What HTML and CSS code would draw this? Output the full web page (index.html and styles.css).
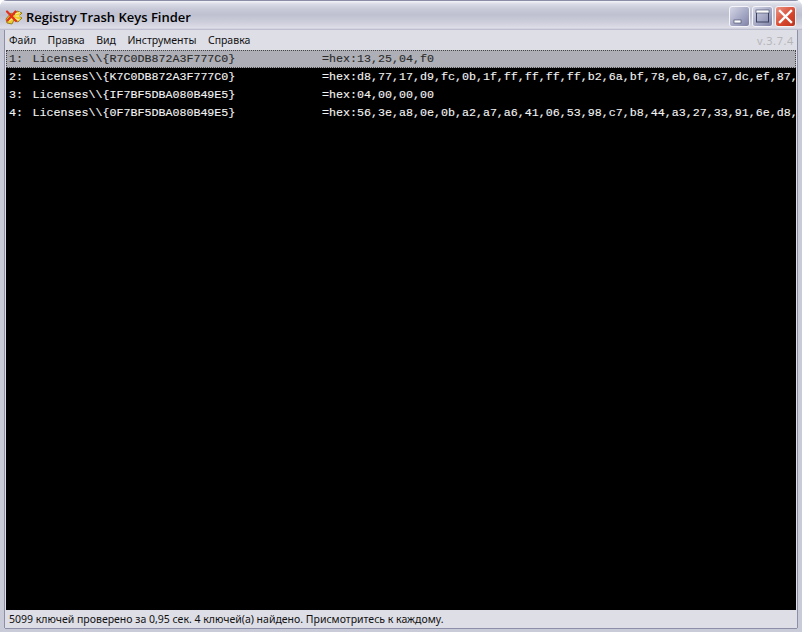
FILE: index.html
```html
<!DOCTYPE html>
<html lang="ru">
<head>
<meta charset="utf-8">
<title>Registry Trash Keys Finder</title>
<link rel="stylesheet" href="styles.css">
</head>
<body>
<div class="window">
  <header class="titlebar">
    <svg class="app-icon" width="18" height="18" viewBox="0 0 18 18">
      <path d="M1 11 L6 5 L9 7 L12 3 L17 5 L14 8 L17 10 L13 14 L9 12 L7 16 L2 15 Z" fill="#eecb2a" stroke="#86680e" stroke-width="0.8"/>
      <path d="M10 6 L15 4.5 M10.5 8 L15.5 8 M10 10.5 L14.5 12 M4 13 L7 11" stroke="#fff3a4" stroke-width="1"/>
      <path d="M2 3.5 L11 13 M10.5 3.5 L2.5 12.5" stroke="#e2301a" stroke-width="2.2" stroke-linecap="round"/>
    </svg>
    <h1 class="title">Registry Trash Keys Finder</h1>
    <div class="controls">
      <div class="btn btn-blue">
        <svg width="21" height="21" viewBox="0 0 21 21"><rect x="5" y="14" width="7" height="3" fill="#fff" stroke="#39405f" stroke-width="0.6"/></svg>
      </div>
      <div class="btn btn-blue">
        <svg width="21" height="21" viewBox="0 0 21 21"><rect x="4.5" y="5" width="12" height="11" fill="none" stroke="#39405f" stroke-width="1"/><rect x="4" y="4" width="13" height="3" fill="#fff" stroke="#39405f" stroke-width="0.6"/></svg>
      </div>
      <div class="btn btn-red">
        <svg width="21" height="21" viewBox="0 0 21 21"><path d="M5 5 L16 16 M16 5 L5 16" stroke="#fff" stroke-width="2.4" stroke-linecap="square"/></svg>
      </div>
    </div>
  </header>
  <div class="body">
    <nav class="menubar">
      <span class="menu-item">Файл</span>
      <span class="menu-item">Правка</span>
      <span class="menu-item">Вид</span>
      <span class="menu-item">Инструменты</span>
      <span class="menu-item">Справка</span>
      <span class="version">v.3.7.4</span>
    </nav>
    <main class="list">
      <div class="row selected"><span class="num">1:</span><span class="key">Licenses\\{R7C0DB872A3F777C0}</span><span class="val">=hex:13,25,04,f0</span></div>
      <div class="row"><span class="num">2:</span><span class="key">Licenses\\{K7C0DB872A3F777C0}</span><span class="val">=hex:d8,77,17,d9,fc,0b,1f,ff,ff,ff,ff,b2,6a,bf,78,eb,6a,c7,dc,ef,87,</span></div>
      <div class="row"><span class="num">3:</span><span class="key">Licenses\\{IF7BF5DBA080B49E5}</span><span class="val">=hex:04,00,00,00</span></div>
      <div class="row"><span class="num">4:</span><span class="key">Licenses\\{0F7BF5DBA080B49E5}</span><span class="val">=hex:56,3e,a8,0e,0b,a2,a7,a6,41,06,53,98,c7,b8,44,a3,27,33,91,6e,d8,</span></div>
    </main>
    <footer class="status">5099 ключей проверено за 0,95 сек. 4 ключей(а) найдено. Присмотритесь к каждому.</footer>
  </div>
</div>
</body>
</html>
```
FILE: styles.css
```css
* { box-sizing: border-box; }
html, body { margin: 0; padding: 0; background: #fff; }
body { width: 802px; height: 632px; overflow: hidden; }

.window {
  width: 802px;
  height: 632px;
  display: flex;
  flex-direction: column;
  border-radius: 7px 7px 0 0;
  background: #c9cbd9;
  overflow: hidden;
}

.titlebar {
  height: 30px;
  flex: none;
  display: flex;
  align-items: center;
  padding: 2px 6px 0 5px;
  background: linear-gradient(#f4f5f9 0, #d9dbe6 3px, #c8cad8 8px, #bfc1d1 14px, #cfd0dc 22px, #dddee7 27px, #9c9db5 30px);
  border-top: 1px solid #8c8ea8;
}
.app-icon { flex: none; margin-right: 3px; }
.title {
  margin: 0;
  flex: 1;
  font: 600 13px "Open Sans", sans-serif;
  color: #000;
  white-space: nowrap;
}
.controls { display: flex; gap: 2px; }
.btn {
  width: 21px;
  height: 21px;
  border: 1px solid #f4f4f8;
  border-radius: 3px;
  overflow: hidden;
}
.btn svg { display: block; margin: -1px; }
.btn-blue { background: linear-gradient(135deg, #d4d6e6, #9da0be 65%, #7f82a6); }
.btn-red { background: linear-gradient(135deg, #eb9484, #d6452c 60%, #bb3520); }

.body {
  flex: 1;
  min-height: 0;
  display: flex;
  flex-direction: column;
  margin: 0 5px 4px 5px;
  padding: 0 1px;
  background: #dedee6;
  box-shadow: -1px 0 0 #8d8fa8, 1px 0 0 #8d8fa8, 0 1px 0 #8d8fa8;
}

.menubar {
  height: 20px;
  flex: none;
  display: flex;
  align-items: center;
  padding: 0 0 0 3px;
  gap: 11.5px;
  font: 10.5px "Noto Sans", sans-serif;
  color: #111;
}
.version {
  margin-left: auto;
  margin-right: 2px;
  color: #b6b6b8;
  font: 11px "Noto Sans", sans-serif;
  letter-spacing: 0.6px;
}

.list {
  flex: 1;
  min-height: 0;
  background: #000;
  overflow: hidden;
  font: 11.67px/18px "Liberation Mono", monospace;
  color: #f4f4f4;
  -webkit-text-stroke: 0.12px currentColor;
}
.row {
  height: 18px;
  display: flex;
  white-space: nowrap;
  padding-left: 3px;
}
.row.selected {
  background: #aeafb6;
  color: #2a2a2a;
  outline: 1px dotted #444;
  outline-offset: -1px;
}
.num { width: 23.5px; flex: none; }
.key { width: 289.5px; flex: none; }
.val { flex: none; }

.status {
  height: 18px;
  flex: none;
  font: 10.5px/18px "Noto Sans", sans-serif;
  color: #111;
  padding-left: 3px;
  white-space: nowrap;
}
```
